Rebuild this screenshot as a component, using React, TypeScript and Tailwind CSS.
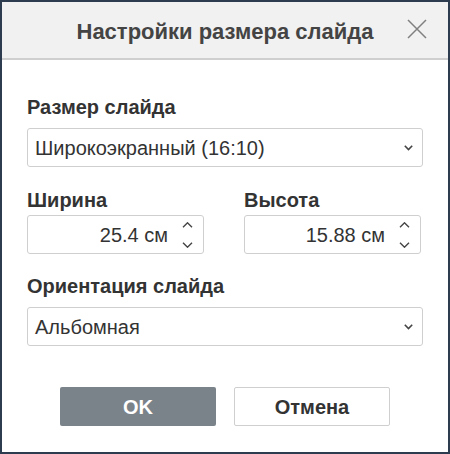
import React from "react";

const font = { fontFamily: '"Liberation Sans", Arial, sans-serif' };

function Chevron() {
  return (
    <svg width="9" height="6" viewBox="0 0 9 6" className="shrink-0">
      <path d="M0.8 0.8 L4.5 4.6 L8.2 0.8" fill="none" stroke="#444" strokeWidth="1.6" />
    </svg>
  );
}

function Spinner() {
  return (
    <div className="flex flex-col items-center gap-[14px]">
      <svg width="11" height="6" viewBox="0 0 11 6">
        <path d="M1 5.2 L5.5 0.8 L10 5.2" fill="none" stroke="#444" strokeWidth="1.4" />
      </svg>
      <svg width="11" height="6" viewBox="0 0 11 6">
        <path d="M1 0.8 L5.5 5.2 L10 0.8" fill="none" stroke="#444" strokeWidth="1.4" />
      </svg>
    </div>
  );
}

function Select({ value }: { value: string }) {
  return (
    <div className="h-[39px] w-[396px] border border-[#cfcfcf] rounded-[3px] bg-white flex items-center pl-[7px] pr-[9px] justify-between">
      <span className="text-[20px] text-[#333]">{value}</span>
      <Chevron />
    </div>
  );
}

function NumInput({ value }: { value: string }) {
  return (
    <div className="h-[39px] w-[177px] border border-[#cfcfcf] rounded-[3px] bg-white flex items-center justify-end pr-[10px]">
      <span className="text-[20px] text-[#333] mr-[14px]">{value}</span>
      <Spinner />
    </div>
  );
}

export default function App() {
  return (
    <div style={font} className="w-[450px] h-[454px] border-2 border-[#2d3c4e] bg-white flex flex-col">
      <div className="h-[58px] bg-[#f1f1f1] border-b-2 border-[#cfcfcf] flex items-center relative">
        <div className="flex-1 text-center text-[22px] font-bold text-[#444] pt-[2px]">Настройки размера слайда</div>
        <svg width="20" height="20" viewBox="0 0 20 20" className="absolute left-[405px] top-[17px]">
          <path d="M1 1 L19 19 M19 1 L1 19" stroke="#808080" strokeWidth="1.5" fill="none" />
        </svg>
      </div>
      <div className="flex flex-col pl-[25px] pt-[36px]">
        <div className="text-[20px] leading-[22px] font-bold text-[#333]">Размер слайда</div>
        <div className="mt-[10px]">
          <Select value="Широкоэкранный (16:10)" />
        </div>
        <div className="flex gap-[40px] mt-[22px]">
          <div className="flex flex-col">
            <div className="text-[20px] leading-[22px] font-bold text-[#333]">Ширина</div>
            <div className="mt-[4px]">
              <NumInput value="25.4 см" />
            </div>
          </div>
          <div className="flex flex-col">
            <div className="text-[20px] leading-[22px] font-bold text-[#333]">Высота</div>
            <div className="mt-[4px]">
              <NumInput value="15.88 см" />
            </div>
          </div>
        </div>
        <div className="text-[20px] leading-[22px] font-bold text-[#333] mt-[21px]">Ориентация слайда</div>
        <div className="mt-[10px]">
          <Select value="Альбомная" />
        </div>
        <div className="flex gap-[18px] mt-[41px] pl-[33px]">
          <div className="w-[156px] h-[39px] bg-[#7b838a] rounded-[2px] flex items-center justify-center text-white font-bold text-[20px]">OK</div>
          <div className="w-[156px] h-[39px] bg-white border border-[#cfcfcf] rounded-[2px] flex items-center justify-center text-[#333] font-bold text-[20px]">Отмена</div>
        </div>
      </div>
    </div>
  );
}
